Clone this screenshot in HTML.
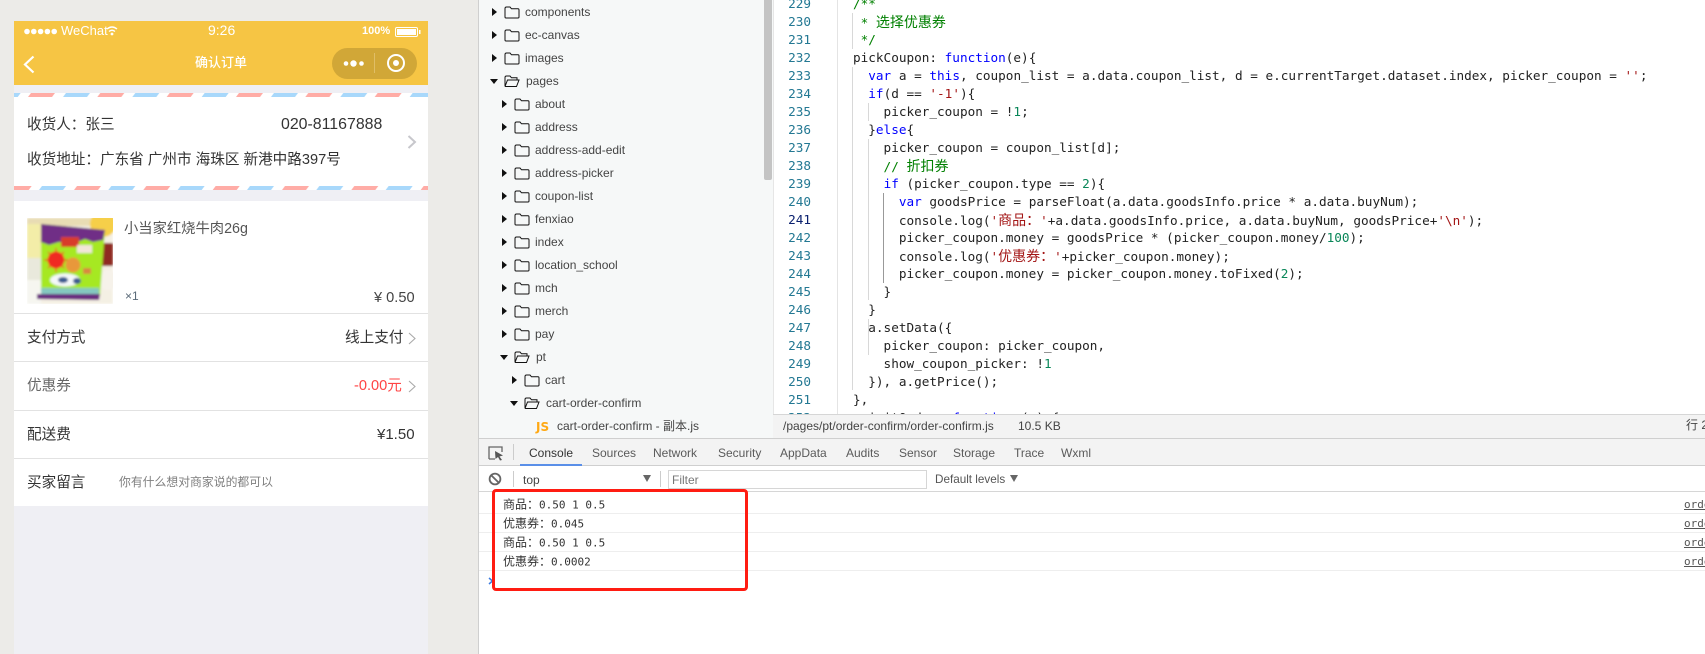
<!DOCTYPE html>
<html><head><meta charset="utf-8">
<style>
html,body{margin:0;padding:0}
body{width:1705px;height:654px;overflow:hidden;background:#ecebe8;position:relative;font-family:"Liberation Sans","Noto Sans CJK SC",sans-serif}
.a{position:absolute;white-space:pre;line-height:20px}
.abs{position:absolute}
#phone{left:14px;top:21px;width:414px;height:633px;background:#efeff4;overflow:hidden}
.t{color:#333;font-size:14.6px;transform:translateY(-50%)}
.hr{position:absolute;left:14px;width:414px;height:1px;background:#e2e2e2}
.tr{color:#444;font-size:12px;transform:translateY(-50%);line-height:20px;position:absolute;white-space:pre}
.fo{position:absolute;width:16px;height:13px}
.ar{position:absolute;width:0;height:0;border-top:4.5px solid transparent;border-bottom:4.5px solid transparent;border-left:5px solid #111}
.ad{position:absolute;width:0;height:0;border-left:4.5px solid transparent;border-right:4.5px solid transparent;border-top:5px solid #111}
#code{position:absolute;left:853px;top:-5.4px;font:12.7px/18px "DejaVu Sans Mono","Noto Sans CJK SC",monospace;color:#222;white-space:pre}
#code div{height:18px}
#nums{position:absolute;left:773px;width:38px;top:-5.4px;text-align:right;font:12.7px/18px "DejaVu Sans Mono",monospace;color:#237893}
.k{color:#00f}.s{color:#a31515}.n{color:#098658}.g{color:#008000}
.c{font-family:"Noto Sans CJK SC",sans-serif;font-size:14px}
.tab{position:absolute;top:452.5px;transform:translateY(-50%);font-size:12px;line-height:20px;color:#5a5a5a;white-space:pre}
.con{position:absolute;left:503px;color:#333;font:11px/18px "DejaVu Sans Mono",monospace;white-space:pre;transform:translateY(-50%)}
.con b{font:400 12px/18px "Noto Sans CJK SC",sans-serif;display:inline-block}
.con b i{font-style:normal;display:inline-block;width:12px}
.ln{position:absolute;left:479px;right:0;height:1px;background:#eeeeee}
.lk{position:absolute;left:1684px;font:11px/14px "DejaVu Sans Mono",monospace;color:#555;text-decoration:underline;transform:translateY(-50%)}
.ig{position:absolute;width:1px;background:#d8d8d8}
</style></head>
<body>
<svg width="0" height="0" style="position:absolute"><defs>
<symbol id="cl" viewBox="0 0 16 13"><path d="M1 2.5 Q1 1 2.5 1 H6 L7.5 2.8 H14 Q15 2.8 15 4 V11 Q15 12 14 12 H2 Q1 12 1 11 Z" fill="none" stroke="#111" stroke-width="1"/></symbol>
<symbol id="op" viewBox="0 0 16 13"><path d="M1 11.5 V2.5 Q1 1 2.5 1 H6 L7.5 2.8 H13 V5 M1 11.5 H12.5 L15 5 H3.5 L1 11.5" fill="none" stroke="#111" stroke-width="1"/></symbol>
<pattern id="st1" width="69.33" height="4" patternUnits="userSpaceOnUse"><polygon points="14,4 17,0 41,0 38,4" fill="#ffaca6"/><polygon points="49,4 52,0 76,0 73,4" fill="#a8d8fb"/><polygon points="-20.33,4 -17.33,0 6.67,0 3.67,4" fill="#a8d8fb"/></pattern>
<pattern id="st2" width="69.33" height="4" patternUnits="userSpaceOnUse"><polygon points="25,4 28,0 52,0 49,4" fill="#a8d8fb"/><polygon points="60,4 63,0 87,0 84,4" fill="#ffaca6"/><polygon points="-9.33,4 -6.33,0 17.67,0 14.67,4" fill="#ffaca6"/></pattern>
<filter id="bl" x="0" y="0" width="100%" height="100%"><feGaussianBlur stdDeviation="1"/></filter>
</defs></svg>

<!-- PHONE -->
<div class="abs" id="phone"></div>
<div class="abs" style="left:14px;top:21px;width:414px;height:64px;background:#f6c544"></div>
<svg class="abs" style="left:14px;top:21px" width="414" height="64">
<g fill="#fff"><circle cx="13" cy="10.5" r="2.8"/><circle cx="19.8" cy="10.5" r="2.8"/><circle cx="26.6" cy="10.5" r="2.8"/><circle cx="33.4" cy="10.5" r="2.8"/><circle cx="40.2" cy="10.5" r="2.8"/></g>
<path d="M93 8 Q98 4 103 8 M95 10.5 Q98 8 101 10.5" stroke="#fff" stroke-width="1.4" fill="none"/><circle cx="98" cy="13" r="1.4" fill="#fff"/>
<rect x="381.5" y="6.5" width="22" height="9" rx="1.5" fill="none" stroke="#fff" stroke-width="1"/><rect x="383" y="8" width="19" height="6" fill="#fff"/><rect x="405" y="9" width="1.5" height="4" fill="#fff"/>
<path d="M19.5 35.5 L11 43.5 L19.5 51.5" stroke="#fff" stroke-width="2.2" fill="none"/>
<rect x="318" y="27" width="85" height="31" rx="15.5" fill="#d1a737"/>
<circle cx="332" cy="42.5" r="2.3" fill="#fff"/><circle cx="339.5" cy="42.5" r="3.2" fill="#fff"/><circle cx="347.5" cy="42.5" r="2.3" fill="#fff"/>
<rect x="360" y="32" width="1" height="20" fill="#e0be66"/>
<circle cx="382" cy="42" r="8" fill="none" stroke="#fff" stroke-width="2"/><circle cx="382" cy="42" r="3" fill="#fff"/>
</svg>
<div class="a" style="left:61px;top:20.5px;color:#fff;font-size:13px">WeChat</div>
<div class="a" style="left:208px;top:20px;color:#fff;font-size:14px">9:26</div>
<div class="a" style="left:362px;top:21px;color:#fff;font-size:11px;font-weight:700">100%</div>
<div class="a" style="left:195px;top:52.5px;color:#fff;font-size:13px;font-weight:500">确认订单</div>

<div class="abs" style="left:14px;top:97px;width:414px;height:90px;background:#fff"></div>
<svg class="abs" style="left:14px;top:93px" width="414" height="4"><rect width="414" height="4" fill="#fff"/><rect width="414" height="4" fill="url(#st1)"/></svg>
<svg class="abs" style="left:14px;top:186px" width="414" height="4"><rect width="414" height="4" fill="#fff"/><rect width="414" height="4" fill="url(#st2)"/></svg>
<div class="a t" style="left:27px;top:125px">收货人：张三</div>
<div class="a t" style="left:281px;top:125px;font-size:15.9px">020-81167888</div>
<div class="a t" style="left:27px;top:160px">收货地址：广东省 广州市 海珠区 新港中路397号</div>
<svg class="abs" style="left:406px;top:134px" width="12" height="16"><path d="M2.5 2 L9 8 L2.5 14" stroke="#c7c7cc" stroke-width="2" fill="none"/></svg>

<div class="abs" style="left:14px;top:201px;width:414px;height:305px;background:#fff"></div>
<svg class="abs" style="left:27px;top:218px" width="86" height="86" viewBox="0 0 86 86">
<g filter="url(#bl)">
<rect width="86" height="86" fill="#f4f0e4"/>
<rect x="0" y="0" width="70" height="8" fill="#e8dcb4"/>
<rect x="0" y="6" width="14" height="34" fill="#f3eda8"/>
<rect x="0" y="40" width="14" height="22" fill="#e9e9dc"/>
<rect x="0" y="62" width="14" height="24" fill="#f6f6f0"/>
<circle cx="76" cy="6" r="13" fill="#f6cf4a"/>
<rect x="74" y="25" width="12" height="23" fill="#8f2a22"/>
<circle cx="81" cy="62" r="10" fill="#f6f2ea"/>
<polygon points="14,6 78,12 73,78 14,78" fill="#a6e824"/>
<polygon points="14,6 78,12 76,22 66,24 58,21 46,26 32,24 22,27 14,24" fill="#6f2d86"/>
<polygon points="10,76 73,76 72,82 10,81" fill="#6a2a80"/>
<rect x="34" y="19" width="18" height="10" fill="#d83c2c"/>
<rect x="50" y="27" width="15" height="8" fill="#f2e6d8"/>
<circle cx="29" cy="42" r="8.5" fill="#f02a20"/>
<g stroke="#f02a20" stroke-width="1.2"><path d="M29 30 V54 M17 42 H41 M21 34 L37 50 M37 34 L21 50"/></g>
<circle cx="46" cy="47" r="7.5" fill="#e8983a"/>
<rect x="56" y="50" width="8" height="6" fill="#d88840"/>
<ellipse cx="38" cy="62" rx="15" ry="6.5" fill="#f4f8fa"/>
<ellipse cx="36" cy="62" rx="5" ry="3" fill="#3a5a90"/>
<ellipse cx="50" cy="63" rx="4" ry="3" fill="#3a5a90"/>
<rect x="14" y="70" width="58" height="6" fill="#84c8c0"/>
</g>
</svg>
<div class="a" style="left:124px;top:219px;color:#555;font-size:14.3px">小当家红烧牛肉26g</div>
<div class="a" style="left:125px;top:286px;color:#5a6a78;font-size:12px">×1</div>
<div class="a" style="left:374px;top:288px;color:#444;font-size:14.6px">¥ 0.50</div>
<div class="hr" style="top:313px"></div>
<div class="hr" style="top:361px"></div>
<div class="hr" style="top:410px"></div>
<div class="hr" style="top:458px"></div>
<div class="a t" style="left:27px;top:338px">支付方式</div>
<div class="a t" style="left:345px;top:338px">线上支付</div>
<svg class="abs" style="left:407px;top:332px" width="10" height="14"><path d="M2 1 L8 6.5 L2 12" stroke="#aaa" stroke-width="1.1" fill="none"/></svg>
<div class="a t" style="left:27px;top:386px;color:#666">优惠券</div>
<div class="a t" style="left:354px;top:386px;color:#ff4444">-0.00元</div>
<svg class="abs" style="left:407px;top:380px" width="10" height="14"><path d="M2 1 L8 6.5 L2 12" stroke="#aaa" stroke-width="1.1" fill="none"/></svg>
<div class="a t" style="left:27px;top:435px">配送费</div>
<div class="a t" style="left:377px;top:435px;font-size:15px">¥1.50</div>
<div class="a t" style="left:27px;top:483px">买家留言</div>
<div class="a" style="left:119px;top:472px;color:#7f7f7f;font-size:11.85px">你有什么想对商家说的都可以</div>

<!-- IDE tree -->
<div class="abs" style="left:478px;top:0;width:1px;height:654px;background:#cfcfcf"></div>
<div class="abs" style="left:479px;top:0;width:294px;height:438px;background:#f6f8f8"></div>
<div class="abs" style="left:773px;top:0;width:932px;height:414px;background:#fff"></div>
<div class="abs" style="left:764px;top:0;width:8px;height:180px;background:#c4c4c4;border-radius:0 0 2px 2px"></div>
<div class="abs" style="left:773px;top:0;width:1px;height:414px;background:#e6e6e6"></div>
<div class="abs" style="left:837px;top:0;width:1px;height:414px;background:#e4e4e4"></div>

<div class="ar" style="left:492px;top:7.5px"></div><svg class="fo" style="left:504px;top:5.5px"><use href="#cl"/></svg><div class="tr" style="left:525px;top:12px">components</div>
<div class="ar" style="left:492px;top:30.5px"></div><svg class="fo" style="left:504px;top:28.5px"><use href="#cl"/></svg><div class="tr" style="left:525px;top:35px">ec-canvas</div>
<div class="ar" style="left:492px;top:53.5px"></div><svg class="fo" style="left:504px;top:51.5px"><use href="#cl"/></svg><div class="tr" style="left:525px;top:58px">images</div>
<div class="ad" style="left:490px;top:78.5px"></div><svg class="fo" style="left:504px;top:74.5px"><use href="#op"/></svg><div class="tr" style="left:526px;top:81px">pages</div>
<div class="ar" style="left:502px;top:99.5px"></div><svg class="fo" style="left:514px;top:97.5px"><use href="#cl"/></svg><div class="tr" style="left:535px;top:104px">about</div>
<div class="ar" style="left:502px;top:122.5px"></div><svg class="fo" style="left:514px;top:120.5px"><use href="#cl"/></svg><div class="tr" style="left:535px;top:127px">address</div>
<div class="ar" style="left:502px;top:145.5px"></div><svg class="fo" style="left:514px;top:143.5px"><use href="#cl"/></svg><div class="tr" style="left:535px;top:150px">address-add-edit</div>
<div class="ar" style="left:502px;top:168.5px"></div><svg class="fo" style="left:514px;top:166.5px"><use href="#cl"/></svg><div class="tr" style="left:535px;top:173px">address-picker</div>
<div class="ar" style="left:502px;top:191.5px"></div><svg class="fo" style="left:514px;top:189.5px"><use href="#cl"/></svg><div class="tr" style="left:535px;top:196px">coupon-list</div>
<div class="ar" style="left:502px;top:214.5px"></div><svg class="fo" style="left:514px;top:212.5px"><use href="#cl"/></svg><div class="tr" style="left:535px;top:219px">fenxiao</div>
<div class="ar" style="left:502px;top:237.5px"></div><svg class="fo" style="left:514px;top:235.5px"><use href="#cl"/></svg><div class="tr" style="left:535px;top:242px">index</div>
<div class="ar" style="left:502px;top:260.5px"></div><svg class="fo" style="left:514px;top:258.5px"><use href="#cl"/></svg><div class="tr" style="left:535px;top:265px">location_school</div>
<div class="ar" style="left:502px;top:283.5px"></div><svg class="fo" style="left:514px;top:281.5px"><use href="#cl"/></svg><div class="tr" style="left:535px;top:288px">mch</div>
<div class="ar" style="left:502px;top:306.5px"></div><svg class="fo" style="left:514px;top:304.5px"><use href="#cl"/></svg><div class="tr" style="left:535px;top:311px">merch</div>
<div class="ar" style="left:502px;top:329.5px"></div><svg class="fo" style="left:514px;top:327.5px"><use href="#cl"/></svg><div class="tr" style="left:535px;top:334px">pay</div>
<div class="ad" style="left:500px;top:354.5px"></div><svg class="fo" style="left:514px;top:350.5px"><use href="#op"/></svg><div class="tr" style="left:536px;top:357px">pt</div>
<div class="ar" style="left:512px;top:375.5px"></div><svg class="fo" style="left:524px;top:373.5px"><use href="#cl"/></svg><div class="tr" style="left:545px;top:380px">cart</div>
<div class="ad" style="left:510px;top:400.5px"></div><svg class="fo" style="left:524px;top:396.5px"><use href="#op"/></svg><div class="tr" style="left:546px;top:403px">cart-order-confirm</div>
<div class="tr" style="left:536px;top:427px;color:#ffa914;font-weight:700;font-size:12px;font-family:'DejaVu Sans',sans-serif">JS</div><div class="tr" style="left:557px;top:426px">cart-order-confirm - 副本.js</div>

<!-- code -->
<div class="abs" style="left:773px;top:0;width:932px;height:414px;overflow:hidden">
<div class="ig" style="left:79px;top:13px;height:36px"></div>
<div class="ig" style="left:79px;top:67px;height:323px"></div>
<div class="ig" style="left:95px;top:103px;height:18px"></div>
<div class="ig" style="left:95px;top:139px;height:161px"></div>
<div class="ig" style="left:95px;top:319px;height:36px"></div>
<div class="ig" style="left:110px;top:193px;height:90px;background:#999"></div>
</div>
<div class="abs" style="left:0;top:0;width:1705px;height:414px;overflow:hidden">
<div id="nums">229<br>230<br>231<br>232<br>233<br>234<br>235<br>236<br>237<br>238<br>239<br>240<br><span style="color:#0b216f">241</span><br>242<br>243<br>244<br>245<br>246<br>247<br>248<br>249<br>250<br>251<br>252</div>
<div id="code"><div class="g">/**</div><div class="g"> * <span class="c">选择优惠券</span></div><div class="g"> */</div><div>pickCoupon: <span class="k">function</span>(e){</div><div>  <span class="k">var</span> a = <span class="k">this</span>, coupon_list = a.data.coupon_list, d = e.currentTarget.dataset.index, picker_coupon = <span class="s">''</span>;</div><div>  <span class="k">if</span>(d == <span class="s">'-1'</span>){</div><div>    picker_coupon = !<span class="n">1</span>;</div><div>  }<span class="k">else</span>{</div><div>    picker_coupon = coupon_list[d];</div><div class="g">    // <span class="c">折扣券</span></div><div>    <span class="k">if</span> (picker_coupon.type == <span class="n">2</span>){</div><div>      <span class="k">var</span> goodsPrice = parseFloat(a.data.goodsInfo.price * a.data.buyNum);</div><div>      console.log(<span class="s">'<span class="c">商品：</span>'</span>+a.data.goodsInfo.price, a.data.buyNum, goodsPrice+<span class="s">'\n'</span>);</div><div>      picker_coupon.money = goodsPrice * (picker_coupon.money/<span class="n">100</span>);</div><div>      console.log(<span class="s">'<span class="c">优惠券：</span>'</span>+picker_coupon.money);</div><div>      picker_coupon.money = picker_coupon.money.toFixed(<span class="n">2</span>);</div><div>    }</div><div>  }</div><div>  a.setData({</div><div>    picker_coupon: picker_coupon,</div><div>    show_coupon_picker: !<span class="n">1</span></div><div>  }), a.getPrice();</div><div>},</div><div>  initOrder: <span class="k">function</span> (e) {</div></div>
</div>

<!-- status -->
<div class="abs" style="left:773px;top:414px;width:932px;height:24px;background:#f3f3f3;border-top:1px solid #d6d6d6;box-sizing:border-box"></div>
<div class="abs" style="left:479px;top:438px;width:1226px;height:1px;background:#cfcfcf"></div>
<div class="a" style="left:783px;top:416px;font-size:12px;color:#444">/pages/pt/order-confirm/order-confirm.js</div>
<div class="a" style="left:1018px;top:416px;font-size:12px;color:#444">10.5 KB</div>
<div class="a" style="left:1686px;top:415px;font-size:12px;color:#444">行 2</div>

<!-- devtools -->
<div class="abs" style="left:479px;top:466px;width:1226px;height:188px;background:#fff"></div>
<div class="abs" style="left:479px;top:439px;width:1226px;height:26px;background:#f3f3f3"></div>
<div class="abs" style="left:479px;top:465px;width:1226px;height:1px;background:#cfcfcf"></div>
<div class="abs" style="left:479px;top:491px;width:1226px;height:1px;background:#d6d6d6"></div>
<div class="abs" style="left:520px;top:464px;width:62px;height:2px;background:#5a8fe8"></div>
<svg class="abs" style="left:488px;top:445px" width="16" height="16"><path d="M1 14 V2 H14 V7 M1 14 H7" fill="none" stroke="#666" stroke-width="1.3"/><path d="M7 6 L15 10.5 L11.5 11.5 L14 15 L12 15.5 L10 12 L7.5 14 Z" fill="#555"/></svg>
<div class="abs" style="left:513px;top:444px;width:1px;height:16px;background:#ccc"></div>
<div class="tab" style="left:529px;color:#333">Console</div>
<div class="tab" style="left:592px">Sources</div>
<div class="tab" style="left:653px">Network</div>
<div class="tab" style="left:718px">Security</div>
<div class="tab" style="left:780px">AppData</div>
<div class="tab" style="left:846px">Audits</div>
<div class="tab" style="left:899px">Sensor</div>
<div class="tab" style="left:953px">Storage</div>
<div class="tab" style="left:1014px">Trace</div>
<div class="tab" style="left:1061px">Wxml</div>

<svg class="abs" style="left:488px;top:472px" width="14" height="14"><circle cx="7" cy="7" r="5.4" fill="none" stroke="#666" stroke-width="1.8"/><path d="M3.2 3.2 L10.8 10.8" stroke="#666" stroke-width="1.8"/></svg>
<div class="abs" style="left:513px;top:471px;width:1px;height:16px;background:#ccc"></div>
<div class="a" style="left:523px;top:470px;font-size:12px;color:#444">top</div>
<div class="abs" style="left:643px;top:475px;width:0;height:0;border-left:4px solid transparent;border-right:4px solid transparent;border-top:7px solid #666"></div>
<div class="abs" style="left:660px;top:471px;width:1px;height:16px;background:#ccc"></div>
<div class="abs" style="left:668px;top:470px;width:259px;height:19px;border:1px solid #d6d6d6;box-sizing:border-box;background:#fff"></div>
<div class="a" style="left:672px;top:470px;font-size:12px;color:#777">Filter</div>
<div class="a" style="left:935px;top:470px;font-size:11.7px;color:#555">Default levels</div>
<div class="abs" style="left:1010px;top:475px;width:0;height:0;border-left:4px solid transparent;border-right:4px solid transparent;border-top:7px solid #666"></div>

<div class="ln" style="top:513px"></div>
<div class="ln" style="top:532px"></div>
<div class="ln" style="top:551px"></div>
<div class="ln" style="top:570px"></div>
<div class="con" style="top:505px"><b><i>商</i><i>品</i><i>：</i></b>0.50 1 0.5</div>
<div class="con" style="top:524px"><b><i>优</i><i>惠</i><i>券</i><i>：</i></b>0.045</div>
<div class="con" style="top:543px"><b><i>商</i><i>品</i><i>：</i></b>0.50 1 0.5</div>
<div class="con" style="top:562px"><b><i>优</i><i>惠</i><i>券</i><i>：</i></b>0.0002</div>
<div class="lk" style="top:505px">order</div>
<div class="lk" style="top:524px">order</div>
<div class="lk" style="top:543px">order</div>
<div class="lk" style="top:562px">order</div>
<svg class="abs" style="left:488px;top:577px" width="6" height="8"><path d="M1 1 L4.5 4 L1 7" stroke="#3a7ae0" stroke-width="1.5" fill="none"/></svg>
<div class="abs" style="left:492px;top:489px;width:256px;height:102px;border:3px solid #ff1c12;border-radius:4px;box-sizing:border-box"></div>
</body></html>
